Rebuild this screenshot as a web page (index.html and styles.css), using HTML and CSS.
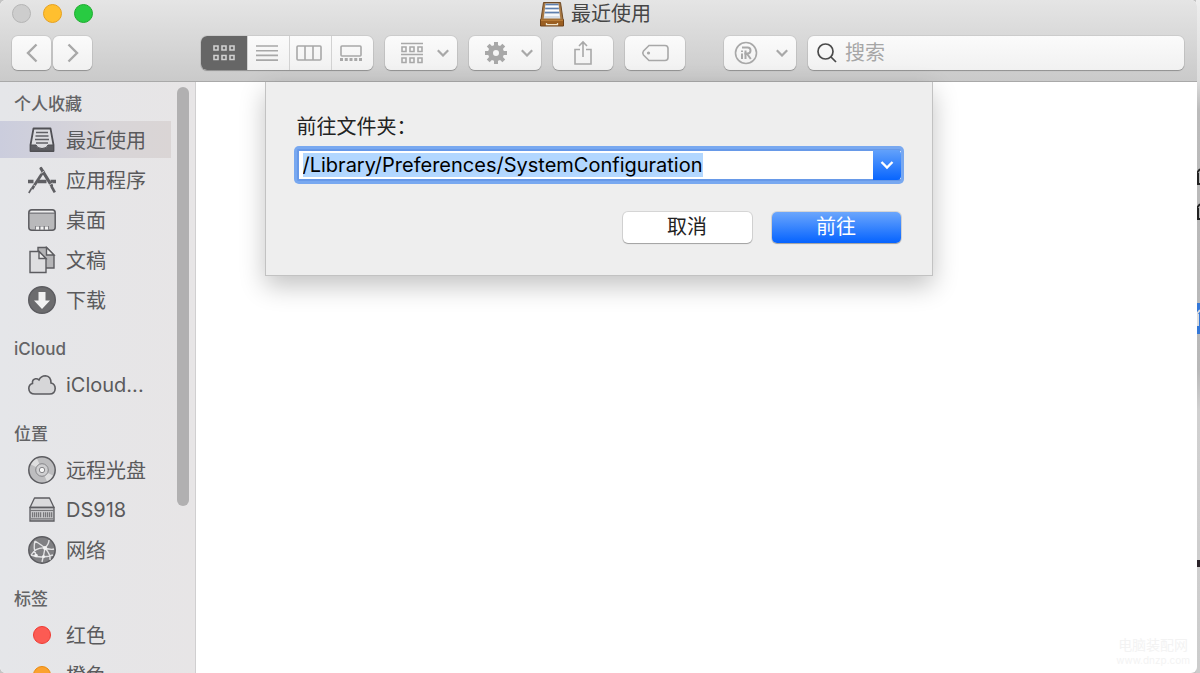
FILE: index.html
```html
<!DOCTYPE html>
<html lang="zh-CN">
<head>
    <meta charset="UTF-8">
    <title>最近使用</title>
    <link rel="stylesheet" href="styles.css">
</head>
<body>
<!-- window behind, only its edge is visible -->
<div class="behind">
    <svg class="line one" width="4" height="18" viewBox="0 0 4 18"><path d="M0 6l4-5M2 5v12M2 16h2"/></svg>
    <svg class="line two" width="4" height="18" viewBox="0 0 4 18"><path d="M0 6l4-5M2 5v12M2 16h2"/></svg>
    <div class="selected"><svg width="4" height="18" viewBox="0 0 4 18"><path d="M0 6l4-5M2 5v12"/></svg></div>
    <div class="dark"></div>
</div>
<div class="window">
    <header>
        <div class="titlebar">
            <div class="lights">
                <button class="close" aria-label="关闭"></button>
                <button class="mini" aria-label="最小化"></button>
                <button class="full" aria-label="全屏"></button>
            </div>
            <h1>
                <svg width="24" height="26" viewBox="0 0 24 26">
                    <path d="M3.500 1.500h17l2.500 17H1z" fill="#a87843" stroke="#6f4a24"/>
                    <path d="M5.500 2.500h13l1.800 15H3.700z" fill="#d5dde6"/>
                    <path d="M5.500 3.500h13M5.200 7.500h13.600M4.800 11.500h14.400" stroke="#5d7fae" stroke-width="1.600"/>
                    <path d="M5.500 5.500h13M5 9.500h14M4.600 14h14.800" stroke="#fff" stroke-width="1.600"/>
                    <path d="M.5 18.500h23V25H.5z" fill="#9b5f22" stroke="#6e421a"/>
                    <path d="M1 19h22" stroke="#d79a4e"/>
                    <path d="M6.500 22v1.600h11V22" fill="none" stroke="#f0e2c8" stroke-width="1.300"/>
                </svg>
                最近使用
            </h1>
        </div>
        <div class="toolbar">
            <div class="nav">
                <button class="tool" aria-label="后退"><svg width="12" height="20" viewBox="0 0 12 20"><path d="M10.500 1.500L2 10l8.500 8.500"/></svg></button>
                <button class="tool" aria-label="前进"><svg width="12" height="20" viewBox="0 0 12 20"><path d="M1.500 1.500L10 10l-8.500 8.500"/></svg></button>
            </div>
            <div class="views">
                <button class="on" aria-label="图标">
                    <svg width="24" height="18" viewBox="0 0 24 18"><path d="M2 2h4v4H2zM10 2h4v4h-4zM18 2h4v4h-4zM2 11.500h4v4H2zM10 11.500h4v4h-4zM18 11.500h4v4h-4z"/></svg>
                </button>
                <button aria-label="列表">
                    <svg width="24" height="18" viewBox="0 0 24 18"><path d="M1 2h22M1 6.700h22M1 11.400h22M1 16.100h22"/></svg>
                </button>
                <button aria-label="分栏">
                    <svg width="26" height="18" viewBox="0 0 26 18"><rect x="1" y="2" width="24" height="14" rx="1"/><path d="M9 2v14M17 2v14"/></svg>
                </button>
                <button aria-label="画廊">
                    <svg width="24" height="18" viewBox="0 0 24 18"><rect x="2" y="2" width="20" height="10" rx="1"/><path d="M1 15.500h22" stroke-width="3" stroke-dasharray="3 1.750"/></svg>
                </button>
            </div>
            <button class="tool wide" aria-label="分组">
                <svg width="24" height="22" viewBox="0 0 24 22"><path d="M1 1.500h22M1 12.500h22M2 5h4v4.500H2zM10 5h4v4.500h-4zM18 5h4v4.500h-4zM2 16h4v4.500H2zM10 16h4v4.500h-4zM18 16h4v4.500h-4z"/></svg>
                <svg class="arrow" width="12" height="8" viewBox="0 0 12 8"><path d="M.8 1.200L6 6.500l5.200-5.300"/></svg>
            </button>
            <button class="tool wide" aria-label="操作">
                <svg width="24" height="24" viewBox="0 0 24 24"><circle cx="12" cy="12" r="5.500" stroke-width="5"/><path d="M12 1v4M12 19v4M1 12h4M19 12h4M4.200 4.200L7 7M17 17l2.800 2.800M4.200 19.800L7 17M17 7l2.800-2.800" stroke-width="4"/></svg>
                <svg class="arrow" width="12" height="8" viewBox="0 0 12 8"><path d="M.8 1.200L6 6.500l5.200-5.300"/></svg>
            </button>
            <button class="tool mid" aria-label="共享">
                <svg width="20" height="26" viewBox="0 0 20 26"><path d="M7 9.500H2V24h16V9.500h-5M10 17V2.500M6 6l4-4 4 4"/></svg>
            </button>
            <button class="tool mid" aria-label="标签">
                <svg width="28" height="18" viewBox="0 0 28 18"><path d="M8 1.500h16q3 0 3 3v9q0 3-3 3H8L2.500 11q-1.500-2 0-4z"/><circle cx="7.500" cy="9" r=".8"/></svg>
            </button>
            <button class="tool wide badge" aria-label="注册">
                <svg width="24" height="24" viewBox="0 0 24 24"><circle cx="12" cy="12" r="10.500"/><path d="M8 6.500h5.500q3 0 3 3t-3 3h-3.300M12.800 12.500l4 5.500M11.500 9.500V18M8 9.500V11M8 12.500V18" stroke-width="2"/></svg>
                <svg class="arrow" width="12" height="8" viewBox="0 0 12 8"><path d="M.8 1.200L6 6.500l5.200-5.300"/></svg>
            </button>
            <label class="search">
                <svg width="20" height="20" viewBox="0 0 20 20"><circle cx="8.500" cy="8.500" r="7.500"/><path d="M14 14l5 5"/></svg>
                <input type="text" placeholder="搜索" aria-label="搜索">
            </label>
        </div>
    </header>
    <div class="main">
        <aside>
            <h2>个人收藏</h2>
            <ul>
                <li><a href="#" class="now">
                    <svg width="28" height="28" viewBox="0 0 28 28"><path d="M5.500 2.500h17L25.500 19v6h-23v-6z" fill="#dcdce0" stroke="#505055" stroke-width="1.800" stroke-linejoin="round"/><path d="M2.500 19h5.500q1 3.500 6 3.500t6-3.500h5.500v6h-23z" fill="#5d5d62" stroke="#505055"/><path d="M8 6.500h12M7.500 10h13M7 13.500h14M8 17h12" stroke="#606065" stroke-width="1.300"/></svg>
                    最近使用</a></li>
                <li><a href="#">
                    <svg width="28" height="28" viewBox="0 0 28 28" fill="none" stroke="#5f5f63"><path d="M0 15.500h5.500M9.500 15.500h9M22.500 15.500H28" stroke-width="3.600"/><path d="M16 4.500L4 23" stroke-width="2.800"/><path d="M3.500 22.500L.8 27" stroke-width="1.600"/><path d="M13 2.500l10.500 17" stroke-width="3.200" stroke-linecap="round"/><path d="M23.500 20.500l3.300 5.800" stroke-width="2.600"/><path d="M12.500 7.500l4-2.500M5.500 19l2.500 1.600M20.500 19.500l4-2.500" stroke="#e6e5e6" stroke-width=".8"/></svg>
                    应用程序</a></li>
                <li><a href="#">
                    <svg width="28" height="28" viewBox="0 0 28 28"><rect x=".8" y="3.800" width="26.400" height="20.400" rx="3" fill="#b9b9bb" stroke="#5c5c60" stroke-width="1.500"/><path d="M3 5h22l1 1.500H2z" fill="#eee"/><path d="M1 7.200h26" stroke="#6c6c70"/><path d="M7 20h14v3.500H7z" fill="#7f7f83"/><path d="M8 20.500h3v3H8zM12.500 20.500h3v3h-3zM17 20.500h3v3h-3z" fill="#f2f2f2"/></svg>
                    桌面</a></li>
                <li><a href="#">
                    <svg width="28" height="28" viewBox="0 0 28 28" stroke="#5c5c60" stroke-width="1.400"><path d="M10 1.500h8.500L26 9v13H10z" fill="#b5b5b7"/><path d="M18.500 1.500V9H26z" fill="#eee"/><path d="M2 5.500h9l7 7v14H2z" fill="#dedee0"/><path d="M11 5.500v7h7z" fill="#eee"/></svg>
                    文稿</a></li>
                <li><a href="#">
                    <svg width="28" height="28" viewBox="0 0 28 28"><circle cx="14" cy="14" r="13.300" fill="#6c6c6e" stroke="#5c5c60" stroke-width="1.400"/><path d="M10.500 6h7v8.500h4.500l-8 8.500-8-8.500h4.500z" fill="#f2f2f2"/></svg>
                    下载</a></li>
            </ul>
            <h2>iCloud</h2>
            <ul>
                <li><a href="#">
                    <svg width="28" height="28" viewBox="0 0 28 28"><path d="M7 23q-6 0-6.200-5.500Q.8 13.500 4.500 12.500 4 8.500 7.500 7.800 9.500 7.500 11 9q2-4.200 6.500-4.200Q23 5.300 23 12q4.200 1 4.200 5.500Q27 23 21.500 23z" fill="#d6d6d8" stroke="#5c5c60" stroke-width="1.600"/></svg>
                    iCloud...</a></li>
            </ul>
            <h2>位置</h2>
            <ul>
                <li><a href="#">
                    <svg width="28" height="28" viewBox="0 0 28 28"><circle cx="14" cy="14" r="13.200" fill="#bdbdbf" stroke="#5c5c60" stroke-width="1.500"/><path d="M14 14L3 8.500Q5 4.500 9 2.500zM14 14l11 5.500q-2 4-6 6z" fill="#dededf"/><circle cx="14" cy="14" r="6.300" fill="#cfcfd1" stroke="#858588"/><circle cx="14" cy="14" r="2.700" fill="#f5f5f5" stroke="#858588"/></svg>
                    远程光盘</a></li>
                <li><a href="#">
                    <svg width="28" height="28" viewBox="0 0 28 28"><path d="M6.500 2h15L26 11.500H2z" fill="#dadadc" stroke="#5c5c60" stroke-width="1.300" stroke-linejoin="round"/><path d="M2 11.500h24V25H2z" fill="#c6c6c8" stroke="#5c5c60" stroke-width="1.300"/><path d="M2 14.500h24M3 22.800h22" stroke="#77777a" stroke-width="1.200"/><path d="M4 18.800h9.500M15 18.800h9.500" stroke="#77777a" stroke-width="5" stroke-dasharray="1.200 .8"/></svg>
                    DS918</a></li>
                <li><a href="#">
                    <svg width="28" height="28" viewBox="0 0 28 28"><circle cx="14" cy="14" r="13.200" fill="#808083" stroke="#5c5c60" stroke-width="1.500"/><path d="M7 5q8 5 10 7M17 12q4-4 4-8M17 12q6 2 9 1M17 12q-1 6-3 14M17 12Q8 11 3 19M3 19q10 4 22 0M8 19Q5 12 7 5M17 12q6 7 5 12" fill="none" stroke="#e2e2e4" stroke-width="1.400"/><g fill="#f2f2f2"><circle cx="17" cy="12" r="2"/><circle cx="8" cy="19.500" r="1.800"/><circle cx="15.500" cy="20.500" r="1.500"/></g></svg>
                    网络</a></li>
            </ul>
            <h2>标签</h2>
            <ul>
                <li><a href="#"><i class="dot red"></i>红色</a></li>
                <li><a href="#"><i class="dot orange"></i>橙色</a></li>
            </ul>
            <div class="scrollbar"></div>
        </aside>
        <section class="files">
            <p class="mark">电脑装配网<small>www.dnzp.com</small></p>
        </section>
        <form class="sheet">
            <label for="path">前往文件夹：</label>
            <div class="combo">
                <input type="text" id="path" value="/Library/Preferences/SystemConfiguration" spellcheck="false">
                <button type="button" aria-label="历史路径"><svg width="14" height="10" viewBox="0 0 14 10"><path d="M1.500 2L7 7.500 12.500 2"/></svg></button>
            </div>
            <div class="btns">
                <button type="button">取消</button>
                <button type="submit" class="go">前往</button>
            </div>
        </form>
    </div>
</div>
<script>
    var path = document.getElementById("path");
    path.focus();
    path.select();
</script>
</body>
</html>
```
FILE: styles.css
```css
* {
    margin: 0;
    padding: 0;
    box-sizing: border-box;
}
body {
    height: 100vh;
    overflow: hidden;
    position: relative;
    background-color: #c4c4c4;
    font-family: Inter, "Noto Sans CJK SC", sans-serif;
    font-size: 20px;
    color: #5a5a5c;
}
button, input {
    font: inherit;
    color: inherit;
    border: 0;
    background: none;
    outline: none;
}
ul {
    list-style: none;
}
a {
    color: inherit;
    text-decoration: none;
}
svg {
    flex: none;
}

/* window behind */
.behind {
    width: 4px;
    height: 100%;
    position: absolute;
    top: 0;
    right: 0;
    overflow: hidden;
    background: linear-gradient(#eee 0, #ddd 80px, #bbb 110px, #b8b8b8 370px, #d0d0d0 410px, #ccc 100%);
}
.behind svg {
    fill: none;
    stroke: #222;
    stroke-width: 2;
}
.behind .line, .selected, .dark {
    position: absolute;
    left: 0;
}
.behind .one {
    top: 168px;
}
.behind .two {
    top: 203px;
}
.selected {
    width: 4px;
    height: 31px;
    top: 303px;
    padding-top: 6px;
    background-color: #3478d8;
}
.selected svg {
    display: block;
    stroke: #ddd;
}
.dark {
    width: 4px;
    height: 7px;
    top: 560px;
    background-color: #2a2328;
}

.window {
    height: 100vh;
    margin-right: 3px;
    position: relative;
    display: flex;
    flex-direction: column;
    overflow: hidden;
    border-radius: 6px;
    background-color: #fff;
}

/* title and toolbar */
header {
    height: 82px;
    flex: none;
    border-bottom: 1px solid #a9a9a9;
    background: linear-gradient(#e5e5e5, #cacaca);
}
.titlebar {
    height: 28px;
    position: relative;
    display: flex;
    align-items: center;
    justify-content: center;
}
.lights {
    position: absolute;
    left: 12px;
    top: 4px;
    display: flex;
    gap: 12px;
}
.lights button {
    width: 19px;
    height: 19px;
    border: 1px solid #b4b4b4;
    border-radius: 50%;
    background-color: #cdcdcd;
}
.lights .mini {
    border-color: #e5a11f;
    background-color: #ffbf2f;
}
.lights .full {
    border-color: #1eac2f;
    background-color: #28cb42;
}
h1 {
    display: flex;
    align-items: center;
    gap: 7px;
    margin-right: 6px;
    font-size: 20px;
    font-weight: 400;
    line-height: 28px;
    color: #464646;
}
.toolbar {
    display: flex;
    gap: 12px;
    padding: 8px 13px 0 12px;
}
.nav {
    display: flex;
    gap: 2px;
    margin-right: 97px;
}
.tool, .views, .search {
    height: 34px;
    border-radius: 6px;
    background: linear-gradient(#fbfbfb, #f1f1f1);
    box-shadow: 0 0 0 1px rgba(0, 0, 0, .06), 0 1px 1px rgba(0, 0, 0, .25);
}
.tool {
    width: 39px;
    display: flex;
    align-items: center;
    justify-content: center;
}
.toolbar svg {
    fill: none;
    stroke: #a8a8a8;
    stroke-width: 1.6;
}
.nav svg {
    stroke-width: 2.4;
}
.toolbar .wide {
    width: 72px;
    justify-content: space-between;
    padding: 0 8px 0 15px;
}
.toolbar .arrow {
    stroke-width: 2.2;
}
.toolbar .mid {
    width: 60px;
}
.toolbar .badge {
    margin-left: 27px;
    padding-left: 10px;
}
.views {
    display: flex;
    overflow: hidden;
}
.views button {
    width: 42px;
    padding-right: 3px;
    display: flex;
    align-items: center;
    justify-content: center;
    border-left: 1px solid #d2d2d2;
}
.views .on {
    width: 46px;
    padding: 0;
    border: 0;
    background-color: #666;
}
.views .on svg {
    stroke: #d0d0d0;
}
.search {
    flex: 1;
    display: flex;
    align-items: center;
    gap: 8px;
    padding: 0 9px;
}
.search svg {
    stroke: #4a4a4a;
    stroke-width: 1.7;
}
.search input {
    flex: 1;
    min-width: 0;
}
.search input::placeholder {
    color: #a6a6a6;
}

.main {
    flex: 1;
    min-height: 0;
    position: relative;
    display: flex;
}

/* sidebar */
aside {
    width: 196px;
    flex: none;
    padding-top: 10px;
    position: relative;
    overflow: hidden;
    border-right: 1px solid #d0cfd0;
    background: linear-gradient(90deg, #e5e6e9, #e7e5e6);
}
h2 {
    padding-left: 14px;
    font-size: 17px;
    font-weight: 500;
    line-height: 24px;
    margin-bottom: 5px;
    color: #636365;
}
aside ul {
    display: flex;
    flex-direction: column;
    gap: 3px;
    margin-bottom: 19px;
}
aside a {
    height: 37px;
    margin-right: 24px;
    padding-left: 28px;
    display: flex;
    align-items: center;
    gap: 10px;
}
aside .now {
    background: linear-gradient(90deg, #cbcddd, #d8d5d8 60%, #dad5d5);
}
.dot {
    width: 18px;
    height: 18px;
    margin: 0 5px;
    border: 1px solid #ee3a32;
    border-radius: 50%;
    background-color: #fc5b53;
}
.dot.orange {
    border-color: #e88a10;
    background-color: #fba22f;
}
.scrollbar {
    width: 12px;
    height: 419px;
    position: absolute;
    top: 5px;
    right: 6px;
    border-radius: 6px;
    background-color: #b1b0b1;
}

.files {
    flex: 1;
    display: flex;
    align-items: flex-end;
    justify-content: flex-end;
    padding: 7px;
}
.mark {
    font-size: 14px;
    line-height: 18px;
    text-align: center;
    color: #f3f3f3;
}
.mark small {
    display: block;
    font-size: 10px;
    line-height: 12px;
}

/* go to folder */
.sheet {
    width: 668px;
    position: absolute;
    top: 0;
    left: 0;
    right: 0;
    margin: 0 auto;
    padding: 32px 31px;
    border: 1px solid #c2c2c2;
    border-top: 0;
    background-color: #eee;
    box-shadow: 0 10px 24px rgba(0, 0, 0, .24);
    color: #222;
}
.sheet label {
    display: block;
    line-height: 26px;
    margin-bottom: 9px;
}
.combo {
    height: 32px;
    display: flex;
    border: 2px solid #6799e8;
    border-right-width: 0;
    border-radius: 2px;
    background-color: #fff;
    box-shadow: 0 0 0 3px #78a8f0;
}
.combo input {
    flex: 1;
    min-width: 0;
    padding-left: 4px;
    color: #000;
}
.combo input::selection {
    background-color: #b2d7ff;
    color: #000;
}
.combo button {
    width: 28px;
    margin: -1px 0;
    display: flex;
    align-items: center;
    justify-content: center;
    border-radius: 0 4px 4px 0;
    background: linear-gradient(#62a1fb, #0865fe);
}
.combo svg {
    fill: none;
    stroke: #fff;
    stroke-width: 2.4;
}
.btns {
    display: flex;
    justify-content: flex-end;
    gap: 20px;
    margin-top: 31px;
}
.btns button {
    width: 129px;
    height: 31px;
    border-radius: 5px;
    background-color: #fff;
    box-shadow: 0 0 0 1px rgba(0, 0, 0, .1), 0 1px 1px rgba(0, 0, 0, .25);
    line-height: 31px;
}
.btns .go {
    background: linear-gradient(#6ba6fc, #0563ff);
    color: #fff;
}
```
